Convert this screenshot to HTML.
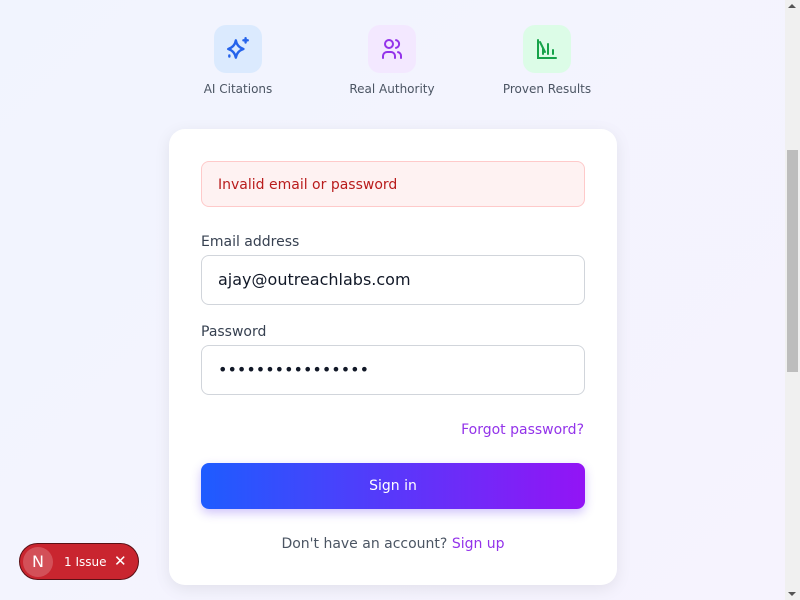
<!DOCTYPE html>
<html><head><style>
*{box-sizing:border-box;margin:0;padding:0}
body{width:800px;height:600px;overflow:hidden;background:linear-gradient(135deg,#f1f4fe,#f6f3fe);font-family:"DejaVu Sans","Liberation Sans",sans-serif;position:relative}
.feat{position:absolute;top:25px;width:120px;text-align:center;font-size:12px;color:#4b5563}
.ic{width:48px;height:48px;border-radius:12px;margin:0 auto 9px;display:flex;align-items:center;justify-content:center}
.card{position:absolute;left:169px;top:129px;width:448px;height:456px;background:#fff;border-radius:16px;box-shadow:0 4px 16px rgba(0,0,0,.08)}
.err{position:absolute;left:32px;top:32px;width:384px;height:46px;background:#fef2f2;border:1px solid #fecaca;border-radius:8px;color:#b91c1c;font-size:14px;padding:15px 16px}
.lbl{position:absolute;left:32px;font-size:14px;color:#374151}
.inp{position:absolute;left:32px;width:384px;height:50px;border:1px solid #d1d5db;border-radius:8px;font-size:16px;color:#111827;padding:14px 16px}
.btn{position:absolute;left:32px;top:334px;width:384px;height:46px;border-radius:8px;background:linear-gradient(90deg,#1e5cff,#9314f5);color:#fff;font-size:14px;text-align:center;line-height:47px;box-shadow:0 4px 10px rgba(100,60,240,.3)}
</style></head><body>
<div class="feat" style="left:178px"><div class="ic" style="background:#dbeafe"><svg width="26" height="26" viewBox="0 0 24 24" fill="none" stroke="#2563eb" stroke-width="2.2" stroke-linecap="round" stroke-linejoin="round"><path d="M10 4 Q11 10 17 12 Q11 14 10 20 Q9 14 3 12 Q9 10 10 4Z"/><path d="M19 2v4M17 4h4M4 18v1"/></svg></div>AI Citations</div>
<div class="feat" style="left:332px"><div class="ic" style="background:#f3e8ff"><svg width="24" height="24" viewBox="0 0 24 24" fill="none" stroke="#9333ea" stroke-width="2" stroke-linecap="round"><circle cx="9" cy="7" r="4"/><path d="M3 21v-2a4 4 0 0 1 4-4h4a4 4 0 0 1 4 4v2M16 3.1a4 4 0 0 1 0 7.8M21 21v-2a4 4 0 0 0-3-3.9"/></svg></div>Real Authority</div>
<div class="feat" style="left:487px"><div class="ic" style="background:#dcfce7"><svg width="24" height="24" viewBox="0 0 24 24" fill="none" stroke="#16a34a" stroke-width="2" stroke-linecap="round"><path d="M3 3v18h18M8 17v-6M13 17V7M18 17v-4M5 5l5 10"/></svg></div>Proven Results</div>
<div class="card">
<div class="err">Invalid email or password</div>
<div class="lbl" style="top:105px">Email address</div>
<div class="inp" style="top:126px">ajay@outreachlabs.com</div>
<div class="lbl" style="top:195px">Password</div>
<div class="inp" style="top:216px;letter-spacing:0">••••••••••••••••</div>
<div style="position:absolute;right:33px;top:293px;font-size:14px;color:#9333ea">Forgot password?</div>
<div class="btn">Sign in</div>
<div style="position:absolute;left:0;width:448px;top:407px;text-align:center;font-size:14px;color:#4b5563">Don't have an account? <span style="color:#9333ea">Sign up</span></div>
</div>
<div style="position:absolute;left:19px;top:543px;width:120px;height:37px;border-radius:19px;background:#c9252f;border:1px solid #5a1015;color:#fff;font-size:12px">
<div style="position:absolute;left:3px;top:3px;width:30px;height:30px;border-radius:50%;background:rgba(255,255,255,.2);text-align:center;line-height:30px;font-size:16px">N</div>
<span style="position:absolute;left:44px;top:11px">1 Issue</span><span style="position:absolute;left:94px;top:8px;font-size:15px">✕</span></div>
<div style="position:absolute;left:785px;top:0;width:15px;height:600px;background:#f0f0f0"></div>
<div style="position:absolute;left:787px;top:150px;width:11px;height:222px;background:#bdbdbd"></div>
<div style="position:absolute;left:788px;top:4px;border:4px solid transparent;border-bottom:4px solid #555;border-top:0;width:0"></div>
<div style="position:absolute;left:788px;top:592px;border:4px solid transparent;border-top:4px solid #555;border-bottom:0;width:0"></div>
</body></html>
